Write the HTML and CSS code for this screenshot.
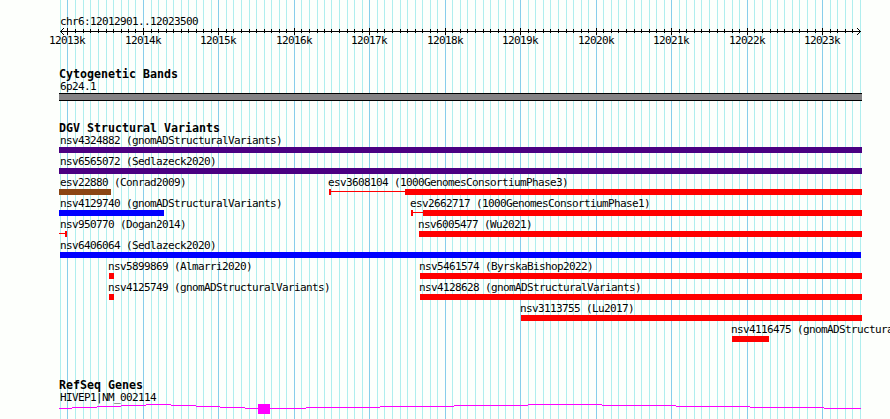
FILE: index.html
```html
<!DOCTYPE html>
<html lang="en">
<head>
    <meta charset="UTF-8">
    <title>chr6:12012901..12023500</title>
    <link rel="stylesheet" href="styles.css">
</head>
<body>
    <div class="browser">
        <svg class="grid" width="890" height="419" shape-rendering="crispEdges">
            <path id="minorLines" class="minor-line"/>
            <path id="majorLines" class="major-line"/>
        </svg>

        <header class="ruler">
            <div class="region">chr6:12012901..12023500</div>
            <svg class="scale" width="890" height="9" shape-rendering="crispEdges">
                <path class="scale-line" d="M60 4.5H861"/>
                <path id="ticks" class="scale-line"/>
                <path class="arrow" d="M60 4h1v1h-1zM61 3h1v3h-1zM62 2h1v1h-1zM62 6h1v1h-1zM63 1h1v1h-1zM63 7h1v1h-1z"/>
                <path class="arrow" d="M860 4h1v1h-1zM859 3h1v3h-1zM858 2h1v1h-1zM858 6h1v1h-1zM857 1h1v1h-1zM857 7h1v1h-1z"/>
            </svg>
            <div class="scale-labels" id="scaleLabels"></div>
        </header>

        <section class="track cytobands">
            <h2>Cytogenetic Bands</h2>
            <div class="label">6p24.1</div>
            <div class="band"></div>
        </section>

        <section class="track variants">
            <h2>DGV Structural Variants</h2>
            <div id="variants"></div>
        </section>

        <section class="track genes">
            <h2>RefSeq Genes</h2>
            <div class="label">HIVEP1|NM_002114</div>
            <svg class="gene" width="890" height="11" shape-rendering="crispEdges">
                <path class="intron" d="M59 4.5H72M72 3.5H97M97 2.5H121M121 1.5H146M146 .5H171M171 1.5H196M196 2.5H220M220 3.5H245M245 4.5H258"/>
                <path class="intron" d="M270 4.5H306M306 3.5H380M380 2.5H454M454 1.5H528M528 .5H602M602 1.5H676M676 2.5H750M750 3.5H824M824 4.5H861"/>
                <rect class="exon" x="258" y="0" width="12" height="10"/>
            </svg>
        </section>
    </div>

    <script>
        const major = [67, 143, 218, 294, 369, 445, 520, 596, 671, 747, 822];
        const minor = [
            60, 75, 83, 90, 98, 106, 113, 121, 128, 135,
            151, 158, 166, 173, 181, 188, 196, 203, 211,
            226, 233, 241, 249, 256, 264, 271, 279, 286,
            301, 309, 317, 324, 331, 339, 347, 354, 362,
            377, 384, 392, 400, 407, 415, 422, 430, 437,
            452, 460, 467, 475, 483, 490, 498, 505, 513,
            528, 535, 543, 550, 558, 566, 573, 581, 588,
            603, 611, 618, 626, 634, 641, 649, 656, 664,
            679, 686, 694, 701, 709, 717, 724, 732, 739,
            754, 762, 770, 777, 784, 792, 799, 807, 815,
            830, 837, 845, 852, 860
        ];

        // one array per row; from/to is the bar, tail is where a thin range starts
        const rows = [
            [{ name: 'nsv4324882 (gnomADStructuralVariants)', x: 60, from: 59, to: 862, type: 'complex' }],
            [{ name: 'nsv6565072 (Sedlazeck2020)', x: 60, from: 59, to: 862, type: 'complex' }],
            [
                { name: 'esv22880 (Conrad2009)', x: 60, from: 59, to: 111, type: 'gain-loss' },
                { name: 'esv3608104 (1000GenomesConsortiumPhase3)', x: 328, tail: 329, from: 405, to: 862, type: 'loss' }
            ],
            [
                { name: 'nsv4129740 (gnomADStructuralVariants)', x: 60, from: 59, to: 164, type: 'gain' },
                { name: 'esv2662717 (1000GenomesConsortiumPhase1)', x: 410, tail: 411, from: 423, to: 862, type: 'loss' }
            ],
            [
                { name: 'nsv950770 (Dogan2014)', x: 60, from: 59, to: 67, type: 'end' },
                { name: 'nsv6005477 (Wu2021)', x: 418, from: 419, to: 862, type: 'loss' }
            ],
            [{ name: 'nsv6406064 (Sedlazeck2020)', x: 60, from: 60, to: 861, type: 'gain' }],
            [
                { name: 'nsv5899869 (Almarri2020)', x: 108, from: 109, to: 114, type: 'loss' },
                { name: 'nsv5461574 (ByrskaBishop2022)', x: 419, from: 420, to: 862, type: 'loss' }
            ],
            [
                { name: 'nsv4125749 (gnomADStructuralVariants)', x: 108, from: 109, to: 114, type: 'loss' },
                { name: 'nsv4128628 (gnomADStructuralVariants)', x: 419, from: 420, to: 862, type: 'loss' }
            ],
            [{ name: 'nsv3113755 (Lu2017)', x: 520, from: 521, to: 862, type: 'loss' }],
            [{ name: 'nsv4116475 (gnomADStructuralVariants)', x: 731, from: 732, to: 769, type: 'loss' }]
        ];

        const vertical = (xs, y1, y2) => xs.map(x => `M${x + 0.5} ${y1}V${y2}`).join('');
        document.getElementById('minorLines').setAttribute('d', vertical(minor, 0, 419));
        document.getElementById('majorLines').setAttribute('d', vertical(major, 0, 419));
        document.getElementById('ticks').setAttribute('d', vertical(minor.slice(1, -1), 2, 6) + vertical(major, 1, 8));

        document.getElementById('scaleLabels').innerHTML = major
            .map((x, i) => `<span style="margin-left:${x - 18}px">${12013 + i}k</span>`)
            .join('');

        function drawBar(f) {
            const tail = f.tail ? `<i class="tail" style="width:${f.from - f.tail}px"></i>` : '';
            const start = f.tail || f.from;
            return `<div class="bar" style="margin-left:${start}px">${tail}<i class="${f.type}" style="width:${f.to - f.from}px"></i></div>`;
        }

        document.getElementById('variants').innerHTML = rows.map(row =>
            `<div class="row">${row.map(f =>
                `<div class="feature"><div class="name" style="margin-left:${f.x}px">${f.name}</div>${drawBar(f)}</div>`
            ).join('')}</div>`
        ).join('');
    </script>
</body>
</html>
```
FILE: styles.css
```css
:root {
    --bg: #fdfffc;
    --minor: #afeeee;
    --major: #87ceeb;
    --loss: #ff0000;
    --gain: #0000ff;
    --complex: #4b0082;
    --gain-loss: #8b4513;
    --gene: #ff00ff;
}

* {
    margin: 0;
    padding: 0;
    box-sizing: border-box;
}

body {
    background-color: var(--bg);
    color: #000;
    font-family: 'DejaVu Sans Mono', 'Liberation Mono', monospace;
    font-size: 11px;
    line-height: 14px;
    letter-spacing: -0.622px;
    overflow: hidden;
}

svg {
    display: block;
}

path {
    fill: none;
}

.browser {
    display: grid;
    grid-template-columns: 890px;
    grid-template-rows: 68px 54px 257px 40px;
    width: 890px;
    height: 419px;
    overflow: hidden;
    white-space: nowrap;
}

/* guide lines sit behind every track */
.grid {
    grid-area: 1 / 1 / -1 / 1;
}

.ruler, .track {
    grid-column: 1;
    z-index: 1;
}

.ruler {
    grid-row: 1;
    padding-top: 15px;
}

.cytobands {
    grid-row: 2;
}

.variants {
    grid-row: 3;
}

.genes {
    grid-row: 4;
}

.minor-line {
    stroke: var(--minor);
}

.major-line {
    stroke: var(--major);
}

.scale-line {
    stroke: #000;
}

path.arrow {
    fill: #000;
}

.region, .label {
    height: 12px;
    padding-left: 60px;
}

.scale-labels {
    display: grid;
    margin-top: -2px;
}

.scale-labels span {
    grid-area: 1 / 1;
}

h2 {
    height: 12px;
    padding-left: 59px;
    font-size: 11.63px;
    line-height: 13px;
    letter-spacing: 0;
}

.band {
    width: 803px;
    height: 8px;
    margin: 1px 0 0 59px;
    background-color: #848284;
    border-top: 1px solid #000;
    border-bottom: 1px solid #000;
}

.row {
    display: grid;
    height: 21px;
}

.feature {
    grid-area: 1 / 1;
}

.name {
    height: 13px;
}

.bar {
    display: flex;
    height: 6px;
}

.bar i {
    height: 6px;
}

.loss {
    background-color: var(--loss);
}

.gain {
    background-color: var(--gain);
}

.complex {
    background-color: var(--complex);
}

.gain-loss {
    background-color: var(--gain-loss);
}

.tail {
    border-left: 2px solid var(--loss);
    background: linear-gradient(var(--loss), var(--loss)) 0 2px / 100% 1px no-repeat;
}

.end {
    border-right: 2px solid var(--loss);
    background: linear-gradient(var(--loss), var(--loss)) 0 2px / 100% 1px no-repeat;
}

.gene {
    margin-top: 1px;
}

.intron {
    stroke: var(--gene);
}

.exon {
    fill: var(--gene);
}
```
